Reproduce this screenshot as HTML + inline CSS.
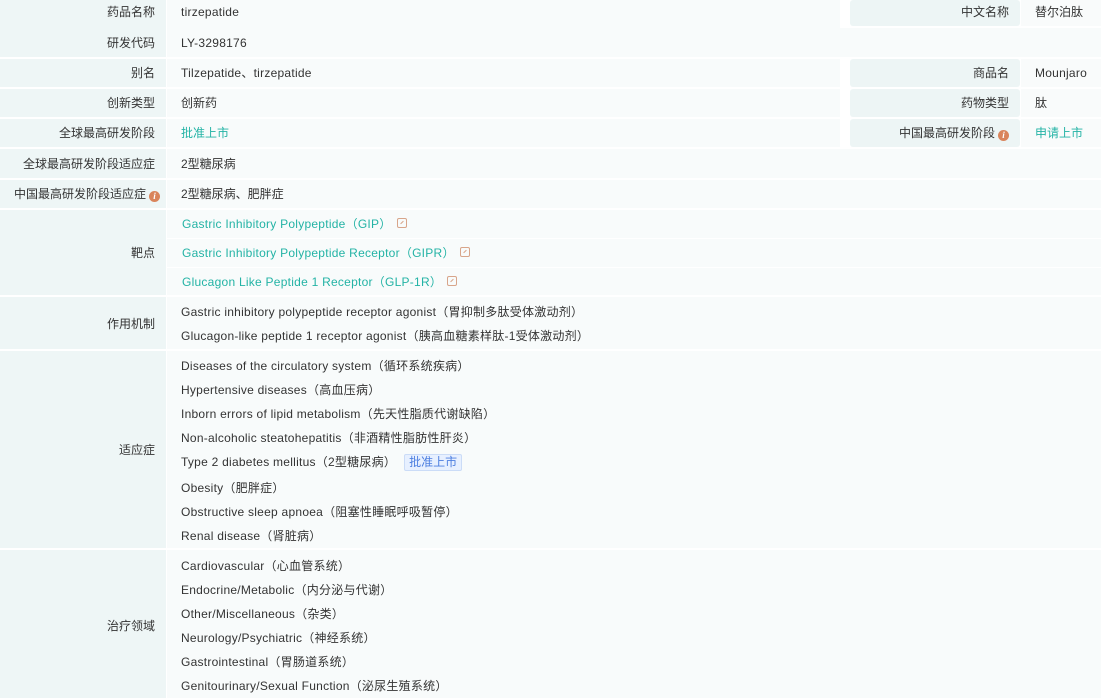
<!DOCTYPE html>
<html><head><meta charset="utf-8">
<style>
*{margin:0;padding:0;box-sizing:border-box}
body{width:1101px;height:698px;background:#fff;font-family:"Liberation Sans","Noto Sans CJK SC",sans-serif;font-size:12px;color:#333;position:relative;overflow:hidden}
.l{position:absolute;left:0;width:166px;background:#eef6f6}
.v{position:absolute;left:167px;right:0;background:#f8fbfb}
.vh{right:261px}
.rl{position:absolute;left:850px;width:170px;background:#edf5f5;border-radius:3px}
.rv{position:absolute;left:1021px;right:0;background:#f9fbfb}
.t{position:absolute;white-space:nowrap;line-height:16px}
.x{letter-spacing:0.25px}
.lt{right:946px;text-align:right}
.g{color:#23b3a5}
.i{display:inline-block;width:11px;height:11px;border-radius:50%;background:#d9845b;color:#fff;font-size:9px;line-height:11px;text-align:center;font-style:italic;font-weight:bold;vertical-align:-1px;margin-left:3px;font-family:"Liberation Serif",serif;letter-spacing:0}
.lk{display:inline-block;width:10px;height:10px;border:1px solid #d8a58a;border-radius:2px;margin-left:5px;vertical-align:0px;position:relative}
.lk:after{content:"";position:absolute;left:2px;top:3px;width:4px;height:1px;background:#d8a58a;transform:rotate(-45deg)}
.tag{display:inline-block;margin-left:8px;padding:0 4px;height:17px;line-height:15px;background:#e7f0ff;border:1px solid #cbdcf7;border-radius:2px;color:#4d7fe0;letter-spacing:0}
</style></head><body>
<div class="l" style="top:0;height:57px"></div>
<div class="l" style="top:59px;height:28px"></div>
<div class="l" style="top:89px;height:28px"></div>
<div class="l" style="top:119px;height:28px"></div>
<div class="l" style="top:149px;height:29px"></div>
<div class="l" style="top:180px;height:28px"></div>
<div class="l" style="top:210px;height:85px"></div>
<div class="l" style="top:297px;height:52px"></div>
<div class="l" style="top:351px;height:197px"></div>
<div class="l" style="top:550px;height:148px"></div>
<div class="v vh" style="top:0;height:28px"></div>
<div class="v" style="top:28px;height:29px"></div>
<div class="v vh" style="top:59px;height:28px"></div>
<div class="v vh" style="top:89px;height:28px"></div>
<div class="v vh" style="top:119px;height:28px"></div>
<div class="v" style="top:149px;height:29px"></div>
<div class="v" style="top:180px;height:28px"></div>
<div class="v" style="top:210px;height:28px"></div>
<div class="v" style="top:239px;height:28px"></div>
<div class="v" style="top:268px;height:27px"></div>
<div class="v" style="top:297px;height:52px"></div>
<div class="v" style="top:351px;height:197px"></div>
<div class="v" style="top:550px;height:148px"></div>
<div class="rl" style="top:0;height:26px"></div><div class="rv" style="top:0;height:26px"></div>
<div class="rl" style="top:59px;height:28px"></div><div class="rv" style="top:59px;height:28px"></div>
<div class="rl" style="top:89px;height:28px"></div><div class="rv" style="top:89px;height:28px"></div>
<div class="rl" style="top:119px;height:28px"></div><div class="rv" style="top:119px;height:28px"></div>

<div class="t lt" style="top:4px">药品名称</div>
<div class="t lt" style="top:35px">研发代码</div>
<div class="t lt" style="top:65px">别名</div>
<div class="t lt" style="top:95px">创新类型</div>
<div class="t lt" style="top:125px">全球最高研发阶段</div>
<div class="t lt" style="top:156px">全球最高研发阶段适应症</div>
<div class="t lt" style="top:186px;right:941px">中国最高研发阶段适应症<span class="i">i</span></div>
<div class="t lt" style="top:245px">靶点</div>
<div class="t lt" style="top:316px">作用机制</div>
<div class="t lt" style="top:442px">适应症</div>
<div class="t lt" style="top:618px">治疗领域</div>

<div class="t x" style="left:181px;top:4px">tirzepatide</div>
<div class="t x" style="left:181px;top:35px">LY-3298176</div>
<div class="t x" style="left:181px;top:65px">Tilzepatide、tirzepatide</div>
<div class="t" style="left:181px;top:95px">创新药</div>
<div class="t g" style="left:181px;top:125px">批准上市</div>
<div class="t" style="left:181px;top:156px">2型糖尿病</div>
<div class="t" style="left:181px;top:186px">2型糖尿病、肥胖症</div>
<div class="t g x" style="left:182px;top:216px">Gastric Inhibitory Polypeptide（GIP）<span class="lk"></span></div>
<div class="t g x" style="left:182px;top:245px">Gastric Inhibitory Polypeptide Receptor（GIPR）<span class="lk"></span></div>
<div class="t g x" style="left:182px;top:274px">Glucagon Like Peptide 1 Receptor（GLP-1R）<span class="lk"></span></div>
<div class="t x" style="left:181px;top:304px">Gastric inhibitory polypeptide receptor agonist（胃抑制多肽受体激动剂）</div>
<div class="t x" style="left:181px;top:328px">Glucagon-like peptide 1 receptor agonist（胰高血糖素样肽-1受体激动剂）</div>
<div class="t x" style="left:181px;top:358px">Diseases of the circulatory system（循环系统疾病）</div>
<div class="t x" style="left:181px;top:382px">Hypertensive diseases（高血压病）</div>
<div class="t x" style="left:181px;top:406px">Inborn errors of lipid metabolism（先天性脂质代谢缺陷）</div>
<div class="t x" style="left:181px;top:430px">Non-alcoholic steatohepatitis（非酒精性脂肪性肝炎）</div>
<div class="t x" style="left:181px;top:454px">Type 2 diabetes mellitus（2型糖尿病）<span class="tag">批准上市</span></div>
<div class="t x" style="left:181px;top:480px">Obesity（肥胖症）</div>
<div class="t x" style="left:181px;top:504px">Obstructive sleep apnoea（阻塞性睡眠呼吸暂停）</div>
<div class="t x" style="left:181px;top:528px">Renal disease（肾脏病）</div>
<div class="t x" style="left:181px;top:558px">Cardiovascular（心血管系统）</div>
<div class="t x" style="left:181px;top:582px">Endocrine/Metabolic（内分泌与代谢）</div>
<div class="t x" style="left:181px;top:606px">Other/Miscellaneous（杂类）</div>
<div class="t x" style="left:181px;top:630px">Neurology/Psychiatric（神经系统）</div>
<div class="t x" style="left:181px;top:654px">Gastrointestinal（胃肠道系统）</div>
<div class="t x" style="left:181px;top:678px">Genitourinary/Sexual Function（泌尿生殖系统）</div>

<div class="t" style="right:92px;top:4px">中文名称</div>
<div class="t" style="right:92px;top:65px">商品名</div>
<div class="t" style="right:92px;top:95px">药物类型</div>
<div class="t" style="right:92px;top:125px">中国最高研发阶段<span class="i">i</span></div>
<div class="t" style="left:1035px;top:4px">替尔泊肽</div>
<div class="t x" style="left:1035px;top:65px">Mounjaro</div>
<div class="t" style="left:1035px;top:95px">肽</div>
<div class="t g" style="left:1035px;top:125px">申请上市</div>
</body></html>
